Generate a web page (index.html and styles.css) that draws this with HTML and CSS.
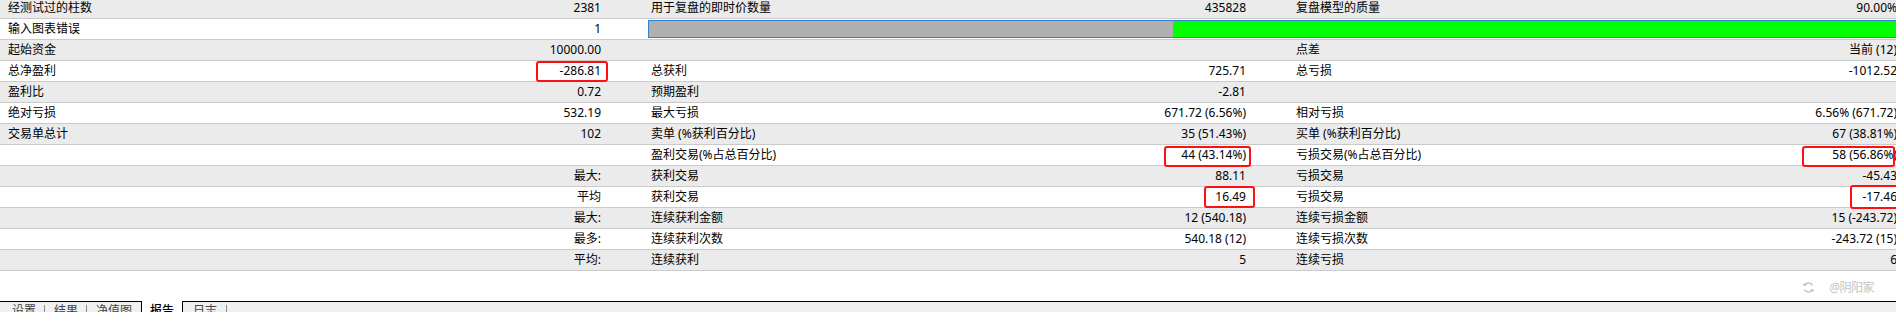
FILE: index.html
```html
<!DOCTYPE html>
<html lang="zh-CN">
<head>
<meta charset="utf-8">
<title>报告</title>
<link rel="stylesheet" href="styles.css">
</head>
<body>
<div class="page">
  <div class="report">
    <div class="row alt"><div class="c lab">经测试过的柱数</div><div class="c val">2381</div><div class="c lab">用于复盘的即时价数量</div><div class="c val">435828</div><div class="c lab">复盘模型的质量</div><div class="c val last">90.00%</div></div>
    <div class="row"><div class="c lab">输入图表错误</div><div class="c val">1</div><div class="barcell"><div class="bar"><div class="bar-gray"></div><div class="bar-green"></div></div></div></div>
    <div class="row alt"><div class="c lab">起始资金</div><div class="c val">10000.00</div><div class="c lab"></div><div class="c val"></div><div class="c lab">点差</div><div class="c val last">当前 (12)</div></div>
    <div class="row"><div class="c lab">总净盈利</div><div class="c val">-286.81<span class="mark m1"></span></div><div class="c lab">总获利</div><div class="c val">725.71</div><div class="c lab">总亏损</div><div class="c val last">-1012.52</div></div>
    <div class="row alt"><div class="c lab">盈利比</div><div class="c val">0.72</div><div class="c lab">预期盈利</div><div class="c val">-2.81</div><div class="c lab"></div><div class="c val last"></div></div>
    <div class="row"><div class="c lab">绝对亏损</div><div class="c val">532.19</div><div class="c lab">最大亏损</div><div class="c val">671.72 (6.56%)</div><div class="c lab">相对亏损</div><div class="c val last">6.56% (671.72)</div></div>
    <div class="row alt"><div class="c lab">交易单总计</div><div class="c val">102</div><div class="c lab">卖单 (%获利百分比)</div><div class="c val">35 (51.43%)</div><div class="c lab">买单 (%获利百分比)</div><div class="c val last">67 (38.81%)</div></div>
    <div class="row"><div class="c lab"></div><div class="c val"></div><div class="c lab">盈利交易(%占总百分比)</div><div class="c val">44 (43.14%)<span class="mark m2"></span></div><div class="c lab">亏损交易(%占总百分比)</div><div class="c val last">58 (56.86%)<span class="mark m3"></span></div></div>
    <div class="row alt"><div class="c lab"></div><div class="c val">最大:</div><div class="c lab">获利交易</div><div class="c val">88.11</div><div class="c lab">亏损交易</div><div class="c val last">-45.43</div></div>
    <div class="row"><div class="c lab"></div><div class="c val">平均</div><div class="c lab">获利交易</div><div class="c val">16.49<span class="mark m4"></span></div><div class="c lab">亏损交易</div><div class="c val last">-17.46<span class="mark m5"></span></div></div>
    <div class="row alt"><div class="c lab"></div><div class="c val">最大:</div><div class="c lab">连续获利金额</div><div class="c val">12 (540.18)</div><div class="c lab">连续亏损金额</div><div class="c val last">15 (-243.72)</div></div>
    <div class="row"><div class="c lab"></div><div class="c val">最多:</div><div class="c lab">连续获利次数</div><div class="c val">540.18 (12)</div><div class="c lab">连续亏损次数</div><div class="c val last">-243.72 (15)</div></div>
    <div class="row alt"><div class="c lab"></div><div class="c val">平均:</div><div class="c lab">连续获利</div><div class="c val">5</div><div class="c lab">连续亏损</div><div class="c val last">6</div></div>
  </div>
  <div class="footer-space">
    <div class="watermark">
      <svg class="wm-icon" width="13" height="13" viewBox="0 0 13 13" aria-hidden="true">
        <path d="M10.5 4.5 A4.5 4.5 0 0 0 2.6 4" fill="none" stroke="#bdbdbd" stroke-width="1.3"/>
        <path d="M2.5 8.5 A4.5 4.5 0 0 0 10.4 9" fill="none" stroke="#bdbdbd" stroke-width="1.3"/>
        <path d="M1.2 2.6 L2.6 4.4 L4.4 3.2" fill="none" stroke="#bdbdbd" stroke-width="1.2"/>
        <path d="M11.8 10.4 L10.4 8.6 L8.6 9.8" fill="none" stroke="#bdbdbd" stroke-width="1.2"/>
      </svg>
      <span class="wm-text">@阴阳家</span>
    </div>
  </div>
  <div class="tabs">
    <div class="tabgroup">
      <span class="tab sep">设置</span><span class="tab sep">结果</span><span class="tab t3">净值图</span>
    </div>
    <span class="tab active">报告</span>
    <div class="tabgroup rest">
      <span class="tab sep t5">日志</span>
    </div>
  </div>
</div>
</body>
</html>
```

FILE: styles.css
```css
html, body {
  margin: 0;
  padding: 0;
  background: #ffffff;
}
body {
  width: 1896px;
  height: 312px;
  overflow: hidden;
  font-family: "Noto Sans", "Noto Sans CJK SC", sans-serif;
  font-size: 12px;
  color: #000;
}
.page {
  width: 1906px;
  display: flex;
  flex-direction: column;
}
.report {
  margin-top: -2px;
}
.row {
  display: grid;
  grid-template-columns: 300px 343px 300px 345px 300px 318px;
  height: 20px;
  line-height: 20px;
  border-bottom: 1px solid #cacaca;
  background: #ffffff;
}
.row.alt {
  background: #ebebeb;
}
.c {
  white-space: nowrap;
  overflow: visible;
}
.lab {
  padding-left: 8px;
}
.val {
  text-align: right;
  padding-right: 42px;
  position: relative;
}
.val.last {
  padding-right: 9px;
}
.barcell {
  grid-column: 3 / -1;
  padding: 1px 0 1px 5px;
}
.bar {
  display: flex;
  height: 16px;
  border: 1px solid #2f7fd6;
}
.bar-gray {
  width: 524px;
  background: #b0b0b0;
}
.bar-green {
  flex: 1;
  background: #00ff00;
}
.mark {
  position: absolute;
  border: 2px solid #ff1010;
  border-radius: 3px;
  box-sizing: border-box;
}
.m1 { left: 236px; top: 0; width: 72px; height: 21px; }
.m2 { left: 221px; top: 1px; width: 87px; height: 21px; }
.m3 { left: 214px; top: 1px; width: 93px; height: 21px; }
.m4 { left: 261px; top: -1px; width: 51px; height: 22px; }
.m5 { left: 262px; top: -2px; width: 52px; height: 24px; }

.footer-space {
  height: 30px;
  display: flex;
  justify-content: flex-end;
  align-items: center;
  padding-right: 32px;
}
.watermark {
  display: flex;
  align-items: center;
  gap: 14px;
  margin-top: 2px;
}
.wm-text {
  color: #c4c4c4;
  font-size: 12px;
  letter-spacing: -0.5px;
}
.tabs {
  display: flex;
  height: 11px;
  background: #f0f0f0;
  align-items: flex-start;
}
.tabgroup {
  display: flex;
  border-top: 1px solid #000;
  padding-left: 3px;
  height: 10px;
}
.tabgroup.rest {
  flex: 1;
  padding-left: 0;
}
.tab {
  color: #444;
  font-size: 12px;
  line-height: 16px;
  padding: 0 9px;
  margin-top: 1px;
  white-space: nowrap;
}
.tab.sep {
  position: relative;
}
.tab.sep::after {
  content: "";
  position: absolute;
  right: 0;
  top: 2px;
  height: 14px;
  border-right: 1px solid #8a8a8a;
}
.tab.t3 {
  padding-right: 9px;
}
.tab.t5 {
  padding-left: 10px;
  padding-right: 10px;
}
.tab.active {
  color: #000;
  background: #fff;
  border-left: 1px solid #000;
  border-right: 1px solid #000;
  padding: 0 8px;
  margin-top: 0;
  padding-top: 2px;
  height: 11px;
  font-weight: 500;
}
```
